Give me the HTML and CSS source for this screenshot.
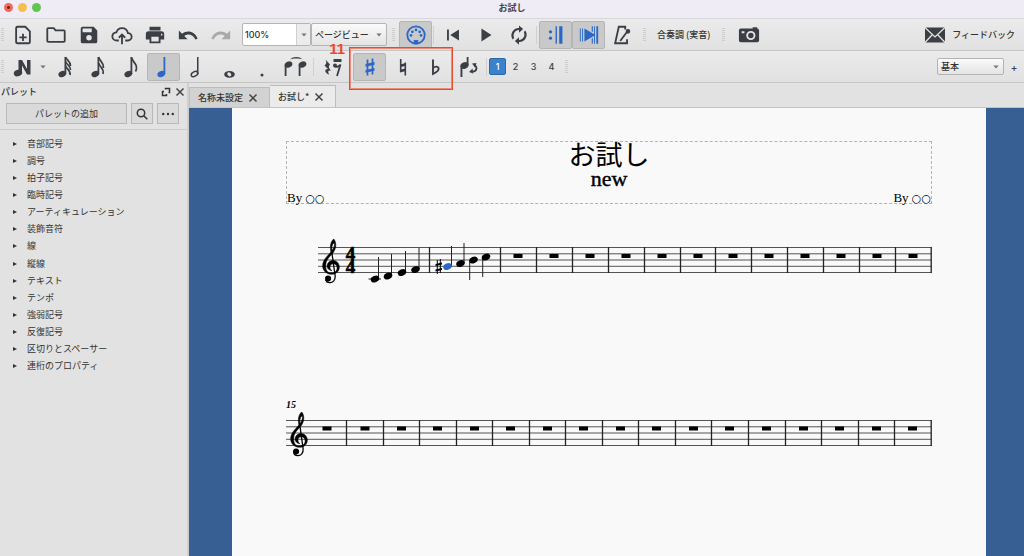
FILE: index.html
```html
<!DOCTYPE html>
<html lang="ja">
<head>
<meta charset="utf-8">
<title>お試し</title>
<link rel="stylesheet" href="styles.css">
</head>
<body>
<svg class="defs" aria-hidden="true">
  <symbol id="arrow" viewBox="0 0 8 5"><path d="M.5 .5h7L4 4.5z" fill="#777"/></symbol>
  <symbol id="cross" viewBox="0 0 10 10"><path d="M1.500 1.500l7 7M8.500 1.500l-7 7" stroke="#444" stroke-width="1.500" fill="none"/></symbol>
  <symbol id="stem-note" viewBox="0 0 24 24"><ellipse cx="9.300" cy="19" rx="4" ry="3" transform="rotate(-25 9.300 19)"/><path d="M11.500 2h1.800v17h-1.800z"/></symbol>
  <symbol id="clef" viewBox="0 0 18 47">
    <path stroke="currentColor" stroke-width=".6" d="M9.300 15.500C7.300 8.500 8.800 3.500 11.800 1 C15 5 14.500 11.500 10.200 16.300 C5.700 20.500 3.500 24 3.500 28.500 C3.500 33.500 6 36 10 35.800 C13.700 35.600 15.600 33 15.200 30 C14.900 27.600 13.500 26.300 11.300 26.400 C9 26.500 7.700 28 7.900 29.800 C8 31.500 8.700 32.500 9.800 33.400 C7 33 4.900 31 5 28.500 C5.100 25.500 7.700 22.900 11 22.900 C14.700 22.900 17.500 26 17.500 29.800 C17.500 34 14 37 9.800 37 C4.500 37 .5 33.500 .5 28.500 C.5 22.500 5 19 8.700 14.500 C12 10.500 13.200 7.500 12.300 4.800 C9.800 6.500 9.300 10 10.300 15z"/>
    <path d="M9.700 13.500L13.200 38.500C13.700 43 11 45.800 7.700 45.700C5.500 45.600 4 44.500 3.600 42.500" fill="none" stroke="currentColor" stroke-width="1.300"/>
    <circle cx="6" cy="41.500" r="3.100"/>
  </symbol>
  <symbol id="head" viewBox="-5 -4 10 8"><ellipse rx="4.400" ry="3.200" transform="rotate(-22)"/></symbol>
</svg>

<div class="app">
  <header class="titlebar">
    <div class="lights"><span class="light close"></span><span class="light mini"></span><span class="light full"></span></div>
    <h1>お試し</h1>
  </header>

  <div class="toolbar">
    <span class="grip"></span>
    <button class="tool" aria-label="新規"><svg class="line" viewBox="0 0 24 24"><path d="M14.500 3H6Q4.500 3 4.500 4.500v15Q4.500 21 6 21h12q1.500 0 1.500-1.500V8zM12 10.500v8M8 14.500h8"/></svg></button>
    <button class="tool" aria-label="開く"><svg class="line" viewBox="0 0 24 24"><path d="M2.500 5.500Q2.500 4.500 3.500 4.500H9.500l2 2.500h9q1 0 1 1v10.500q0 1-1 1H3.500q-1 0-1-1z"/></svg></button>
    <button class="tool" aria-label="保存"><svg viewBox="0 0 24 24"><path fill-rule="evenodd" d="M5 3h12l4 4v12q0 2-2 2H5q-2 0-2-2V5q0-2 2-2zM5 5v4h10V5zM12 12a3 3 0 100 6 3 3 0 000-6z"/></svg></button>
    <button class="tool" aria-label="オンライン保存"><svg class="line" viewBox="0 0 24 24"><path d="M8.500 18H6.500C3.500 18 1.500 16 1.500 13.500S3.500 9.500 5.800 9.200C6.700 6.500 9 4.500 12 4.500c3.300 0 5.800 2.300 6.500 5.500 2.200 0 4 1.700 4 4s-1.800 4-4 4H15.500M12 22V12M8.500 15l3.500-3.500 3.500 3.500"/></svg></button>
    <button class="tool" aria-label="印刷"><svg viewBox="0 0 24 24"><path fill-rule="evenodd" d="M6 3h12v4H6zM5 8h14q3 0 3 3v6h-4v4H6v-4H2v-6q0-3 3-3zM8 14v5h8v-5zM18.500 10.500v2h1.500v-2z"/></svg></button>
    <button class="tool" aria-label="元に戻す"><svg viewBox="0 0 24 24"><path d="M2 7v9.500h9.500L8 13c3.500-3 9.500-2 12 4l2.500-1C19.500 8 11.500 6 5.500 10.500z"/></svg></button>
    <button class="tool faded" aria-label="やり直し"><svg viewBox="0 0 24 24"><path d="M22 7v9.500h-9.500L16 13c-3.500-3-9.500-2-12 4l-2.500-1C4.500 8 12.500 6 18.500 10.500z"/></svg></button>
    <div class="zoom"><input type="text" value="100%" aria-label="ズーム"><button aria-label="ズーム一覧"><svg><use href="#arrow"/></svg></button></div>
    <div class="drop view"><select aria-label="表示"><option>ページビュー</option></select><svg><use href="#arrow"/></svg></div>
    <span class="grip gap"></span>
    <button class="tool on" aria-label="MIDI入力"><svg viewBox="0 0 24 24"><circle cx="12" cy="12" r="9.500" fill="none" stroke="currentColor" stroke-width="2"/><path d="M9.500 17.500h5v4h-5z"/><circle cx="6.500" cy="12.500" r="1.500"/><circle cx="8" cy="8.500" r="1.500"/><circle cx="12" cy="6.500" r="1.500"/><circle cx="16" cy="8.500" r="1.500"/><circle cx="17.500" cy="12.500" r="1.500"/></svg></button>
    <span class="sep"></span>
    <button class="tool" aria-label="先頭へ"><svg viewBox="0 0 24 24"><path d="M5.500 6h2v12h-2zM18.500 6v12L9 12z"/></svg></button>
    <button class="tool" aria-label="再生"><svg viewBox="0 0 24 24"><path d="M7 5v14l11-7z"/></svg></button>
    <button class="tool" aria-label="ループ再生"><svg viewBox="0 0 24 24"><path d="M12 1.500l4.500 4L12 9.500V6.500a6 6 0 00-5.200 8.800l-1.700 1.500A8 8 0 0112 4.300zM12 22.500l-4.500-4 4.500-4v3a6 6 0 005.200-8.800l1.700-1.500A8 8 0 0112 19.700z"/></svg></button>
    <span class="sep"></span>
    <button class="tool on" aria-label="反復再生"><svg viewBox="0 0 24 24"><path d="M11.500 2.500h1.500v19h-1.500zM15.500 2.500h3.500v19h-3.500z"/><circle cx="6" cy="8.500" r="1.800"/><circle cx="6" cy="15.500" r="1.800"/></svg></button>
    <button class="tool on" aria-label="再生位置を追従"><svg viewBox="0 0 24 24"><path d="M2 5h1v14H2zM4.500 5h1v14h-1zM7 5l12 7-12 7zM15 2.500h1.200v6H15zM15 15.500h1.200v6H15zM17.500 2.500h1v19h-1zM20 2.500h2v19h-2z"/></svg></button>
    <button class="tool" aria-label="メトロノーム"><svg class="line" viewBox="0 0 24 24"><path d="M15.500 6V3h-7L4.500 21h13v-4.500M10 18.500L19 6.500M13.500 21h4"/><circle cx="18.500" cy="8" r="1.500" fill="currentColor"/></svg></button>
    <span class="grip gap"></span>
    <button class="label">合奏調 (実音)</button>
    <span class="grip gap"></span>
    <button class="tool camera" aria-label="画像キャプチャ"><svg viewBox="0 0 24 24"><path fill-rule="evenodd" d="M3 5h13V3.500h5V5q2 0 2 2v11q0 2-2 2H3q-2 0-2-2V7q0-2 2-2zM4 8v2h3V8zM14 7.500a5 5 0 100 10 5 5 0 000-10zM14 9.500a3 3 0 110 6 3 3 0 010-6z"/></svg></button>
    <button class="label feedback"><svg viewBox="0 0 22 16"><path fill="#3b3f45" d="M1 .5h20v15H1z"/><path d="M1 .5l10 9.500L21 .5M1 15.500L8 8M21 15.500L14 8" fill="none" stroke="#e6e6e6" stroke-width="1.200"/></svg>フィードバック</button>
  </div>

  <div class="toolbar second">
    <span class="grip"></span>
    <button class="tool entry" aria-label="音符入力"><svg viewBox="0 0 24 24"><path d="M7.500 5H11l5 9V5h3.500v14.500H16L11 10.500V18H7.500z"/><ellipse cx="7" cy="18" rx="4.300" ry="3.200" transform="rotate(-20 7 18)"/></svg></button>
    <button class="more" aria-label="入力方式"><svg><use href="#arrow"/></svg></button>
    <button class="tool" aria-label="32分音符"><svg viewBox="0 0 24 24"><use href="#stem-note"/><path d="M12.500 2c1 3 5 4 5 9M12.500 6.500c1 3 5 4 5 8.500M12.500 11c1 3 5.500 4 4.500 9" fill="none" stroke="currentColor" stroke-width="1.700"/></svg></button>
    <button class="tool" aria-label="16分音符"><svg viewBox="0 0 24 24"><use href="#stem-note"/><path d="M12.500 2c1 4 5.500 5 5 11M12.500 8c1 4 6 5 4.500 11" fill="none" stroke="currentColor" stroke-width="1.700"/></svg></button>
    <button class="tool" aria-label="8分音符"><svg viewBox="0 0 24 24"><use href="#stem-note"/><path d="M12.500 2.500c1 5 7.500 7 4 14" fill="none" stroke="currentColor" stroke-width="1.700"/></svg></button>
    <button class="tool on" aria-label="4分音符"><svg viewBox="0 0 24 24"><use href="#stem-note"/></svg></button>
    <button class="tool" aria-label="2分音符"><svg viewBox="0 0 24 24"><path d="M12 2h1.500v17H12z"/><ellipse cx="9.500" cy="19" rx="3.500" ry="2.200" transform="rotate(-30 9.500 19)" fill="none" stroke="currentColor" stroke-width="1.500"/></svg></button>
    <button class="tool" aria-label="全音符"><svg viewBox="0 0 24 24"><path fill-rule="evenodd" d="M11.500 16c3.200 0 5.300 1.500 5.300 3.400s-2.100 3.300-5.300 3.300-5.300-1.400-5.300-3.300S8.300 16 11.500 16zM10.500 17.200c-1.500.3-1.500 1.900-.7 3s2.200 1.500 3 .9.500-1.900-.2-2.800-1.500-1.200-2.100-1.100z"/></svg></button>
    <button class="tool" aria-label="付点"><svg viewBox="0 0 24 24"><circle cx="11" cy="20" r="1.500"/></svg></button>
    <button class="tool" aria-label="タイ"><svg viewBox="0 0 24 24"><ellipse cx="4.500" cy="9.500" rx="4" ry="3" transform="rotate(-25 4.500 9.500)"/><ellipse cx="18.500" cy="9.500" rx="4" ry="3" transform="rotate(-25 18.500 9.500)"/><path d="M.7 10h1.800v11H.7zM14.700 10h1.800v11h-1.800zM6 4.500C9 1.200 15.500 1.200 18.500 4.500 15 3.200 9.500 3.200 6 4.500z"/></svg></button>
    <span class="sep"></span>
    <button class="tool" aria-label="休符"><svg viewBox="2 0 24 24"><path d="M6.500 4.500l4.500 5c-1.700 2-1.500 3 1.200 6.300-2.700-.8-4 .5-2 3.700-5-1.500-5-6-1.200-5.500L5.500 10.500C7.700 8.500 7.700 7.500 6.500 4.500zM14.500 4h8v3h-8z"/><path d="M15.500 11c1.500 1.500 4 1 6-1.500L18 21" fill="none" stroke="currentColor" stroke-width="1.800"/><circle cx="16" cy="10.500" r="2"/></svg></button>
    <span class="sep"></span>
    <button class="tool on" aria-label="シャープ"><svg viewBox="0 0 24 24"><path d="M9.500 4.500v16M14.500 3.500v16" stroke="currentColor" stroke-width="1.700"/><path d="M7.500 9l9-2v2.800l-9 2zM7.500 15l9-2v2.800l-9 2z"/></svg></button>
    <button class="tool" aria-label="ナチュラル"><svg viewBox="0 0 24 24"><path d="M9.700 4v13M14.300 7.500v13" stroke="currentColor" stroke-width="1.600"/><path d="M9 9.500l6-1.500v2.800L9 12.300zM9 14.700l6-1.500V16l-6 1.500z"/></svg></button>
    <button class="tool" aria-label="フラット"><svg viewBox="0 0 24 24"><path d="M9 4.500v14.500c3-1.500 6.500-3.700 5.500-6.200-.8-1.700-3.500-1.500-5.500.2" fill="none" stroke="currentColor" stroke-width="1.900"/></svg></button>
    <button class="tool" aria-label="符尾の反転"><svg viewBox="0 0 24 24"><ellipse cx="7.500" cy="10.500" rx="4.200" ry="3.200" transform="rotate(-25 7.500 10.500)"/><path d="M3.500 11h1.900v11H3.500zM9.700 2h1.800v8H9.700zM15 8.500l4.500-.5-1.500 4.500zM12 17l3.500-3.500.7 5z"/><path d="M17.500 10c3.500 2.500 2 7-2.500 6.500" fill="none" stroke="currentColor" stroke-width="1.800"/></svg></button>
    <span class="sep"></span>
    <div class="voices"><button class="voice current">1</button><button class="voice">2</button><button class="voice">3</button><button class="voice">4</button></div>
    <span class="grip gap"></span>
    <div class="drop workspace-pick"><select aria-label="ワークスペース"><option>基本</option></select><svg><use href="#arrow"/></svg></div>
    <button class="add" aria-label="ワークスペースを追加">+</button>
  </div>

  <div class="workspace">
    <aside class="dock">
      <div class="dock-head">
        <h2>パレット</h2>
        <button class="mini-btn" aria-label="切り離す"><svg class="thin" viewBox="0 0 10 10"><path d="M4.500 2.500V1.500H8.500V5.500H7.500M3 4.500H1.500V8.500H5.500V7"/></svg></button>
        <button class="mini-btn" aria-label="閉じる"><svg><use href="#cross"/></svg></button>
      </div>
      <div class="dock-tools">
        <button class="add-palette">パレットの追加</button>
        <button aria-label="検索"><svg class="thin" viewBox="0 0 12 12"><circle cx="5" cy="5" r="3.700"/><path d="M7.800 7.800l3.500 3.500"/></svg></button>
        <button aria-label="その他"><svg viewBox="0 0 12 12"><circle cx="1.200" cy="6" r="1.200"/><circle cx="6" cy="6" r="1.200"/><circle cx="10.800" cy="6" r="1.200"/></svg></button>
      </div>
      <ul class="palettes">
        <li>音部記号</li><li>調号</li><li>拍子記号</li><li>臨時記号</li><li>アーティキュレーション</li><li>装飾音符</li><li>線</li><li>縦線</li><li>テキスト</li><li>テンポ</li><li>強弱記号</li><li>反復記号</li><li>区切りとスペーサー</li><li>連桁のプロパティ</li>
      </ul>
    </aside>

    <main class="score-area">
      <div class="tabs">
        <div class="tab">名称未設定<button class="mini-btn" aria-label="閉じる"><svg><use href="#cross"/></svg></button></div>
        <div class="tab active">お試し*<button class="mini-btn" aria-label="閉じる"><svg><use href="#cross"/></svg></button></div>
      </div>
      <div class="canvas">
        <article class="page">
          <div class="frame">
            <p class="title">お試し</p>
            <p class="subtitle">new</p>
            <div class="credits"><span>By <span class="rings">○○</span></span><span>By <span class="rings">○○</span></span></div>
          </div>
          <svg class="system" viewBox="0 0 646 50">
            <path class="staff" d="M32 12.500H645.500M32 18.800H645.500M32 25H645.500M32 31.300H645.500M32 37.500H645.500"/>
            <path class="bars" d="M143.500 12v26M214.500 12v26M250.500 12v26M286.500 12v26M322.500 12v26M358.500 12v26M394.500 12v26M429.500 12v26M465.500 12v26M501.500 12v26M537.500 12v26M573.500 12v26M609.500 12v26M645.200 12v26"/>
            <path class="rests" d="M227.500 21h9M263.500 21h9M299.500 21h9M335.500 21h9M371.500 21h9M407.500 21h9M442.500 21h9M478.500 21h9M514.500 21h9M550.500 21h9M586.500 21h9M622.500 21h9"/>
            <use href="#clef" x="36" y="3" width="18" height="46"/>
            <text class="meter" x="64.500" y="25">4</text><text class="meter" x="64.500" y="37.500">4</text>
            <path class="stems" d="M82.500 44H95M92.500 22v22M105.500 19v21M119.500 16v21M133 13v21M165.500 11v21M178 8v20M183.700 26v19M196.700 22v20"/>
            <use href="#head" x="84" y="40" width="10" height="8"/><use href="#head" x="97" y="37" width="10" height="8"/><use href="#head" x="111" y="33.500" width="10" height="8"/><use href="#head" x="124.500" y="30.500" width="10" height="8"/>
            <use class="picked" href="#head" x="156.500" y="27.500" width="10" height="8"/>
            <use href="#head" x="169.500" y="24.500" width="10" height="8"/><use href="#head" x="182.500" y="21" width="10" height="8"/><use href="#head" x="195" y="18" width="10" height="8"/>
            <path class="sharp" d="M151.300 25v14M154.300 24v14"/><path d="M149.500 29l6.500-1.500v2L149.500 31zM149.500 34.500l6.500-1.500v2l-6.500 1.500z"/>
          </svg>
          <svg class="system later" viewBox="0 -10 646 60">
            <text class="number" x="0" y="0">15</text>
            <path class="staff" d="M0 12.500H645.500M0 18.800H645.500M0 25H645.500M0 31.300H645.500M0 37.500H645.500"/>
            <path class="bars" d="M60.500 12v26M97.500 12v26M133.500 12v26M170.500 12v26M206.500 12v26M243.500 12v26M279.500 12v26M316.500 12v26M352.500 12v26M389.500 12v26M425.500 12v26M462.500 12v26M499.500 12v26M535.500 12v26M572.500 12v26M608.500 12v26M645.200 12v26"/>
            <path class="rests" d="M36.500 20.500h9M74.500 20.500h9M111 20.500h9M147 20.500h9M184 20.500h9M220 20.500h9M257 20.500h9M293 20.500h9M330 20.500h9M366 20.500h9M403 20.500h9M439 20.500h9M476 20.500h9M513 20.500h9M549 20.500h9M586 20.500h9M622 20.500h9"/>
            <use href="#clef" x="4" y="3" width="18" height="46"/>
          </svg>
        </article>
      </div>
    </main>
  </div>

  <div class="callout"><span>11</span></div>
</div>
</body>
</html>
```

FILE: styles.css
```css
* { box-sizing: border-box; }

body {
  margin: 0;
  font: 9px/12px "Noto Sans CJK JP", sans-serif;
  color: #333;
  background: #e2e2e2;
}

h1, h2, p, ul { margin: 0; padding: 0; }
button, input, select { font: inherit; color: inherit; margin: 0; }
button { border: 0; padding: 0; background: none; }
svg { fill: currentColor; flex: none; display: block; }
.line { fill: none; stroke: currentColor; stroke-width: 2; }
.thin { fill: none; stroke: currentColor; stroke-width: 1.5; }

.defs { position: absolute; width: 0; height: 0; }

.app {
  position: relative;
  display: flex;
  flex-direction: column;
  min-height: 100vh;
}

/* window title */
.titlebar {
  display: grid;
  grid-template-columns: 1fr auto 1fr;
  align-items: center;
  height: 18px;
  padding-bottom: 3px;
  background: #f0ecf5;
}
.titlebar h1 { font-size: 9px; font-weight: 700; color: #444; }
.lights { display: flex; gap: 5px; padding-left: 4px; }
.light { width: 9px; height: 9px; border-radius: 50%; }
.close { background: radial-gradient(circle, #8b1a10 1px, #ed6a5e 2px); }
.mini { background: #f5bf4f; }
.full { background: #61c554; }

/* toolbars */
.toolbar {
  display: flex;
  align-items: center;
  height: 33px;
  padding: 0 9px 0 1px;
  border-top: 1px solid #d8d8d8;
  border-bottom: 1px solid #c6c6c6;
  background: linear-gradient(#ebebeb, #e1e1e1);
  color: #3b3f45;
}
.toolbar.second { height: 32px; padding-right: 6px; border-top: 0; }
.grip {
  flex: none;
  width: 3px;
  height: 13px;
  margin-right: 2px;
  background: repeating-linear-gradient(#cdcdcd 0 1px, transparent 1px 2px);
}
.grip.gap { margin: 0 4px 0 5px; }
.sep { flex: none; width: 1px; height: 18px; margin: 0 2px 0 1px; background: #cfcfcf; }
.tool {
  display: flex;
  align-items: center;
  justify-content: center;
  flex: none;
  width: 33px;
  height: 28px;
  border-radius: 2px;
}
.tool svg { width: 22px; height: 22px; }
.second .tool svg { width: 24px; height: 24px; }
.tool.on { background: #c9c9c9; border: 1px solid #b5b5b5; color: #2a68c8; }
.tool.faded { color: #a9a9a9; }
.tool.camera { margin-left: 3px; }

.zoom, .drop {
  flex: none;
  height: 23px;
  border: 1px solid #b4b4b4;
  border-radius: 2px;
  color: #333;
}
.zoom { display: flex; width: 69px; margin-left: 5px; background: #fff; }
.zoom input {
  flex: 1;
  min-width: 0;
  border: 0;
  padding: 0 2px;
  background: none;
  font-family: Inter, sans-serif;
  font-size: 9px;
  font-weight: 500;
}
.zoom button { width: 14px; background: #ececec; border-left: 1px solid #d0d0d0; }
.zoom button svg { margin: 0 auto; }
.zoom svg, .drop svg, .more svg { width: 6px; height: 4px; }
.drop { display: grid; align-items: center; background: linear-gradient(#fafafa, #e4e4e4); }
.drop select {
  grid-area: 1 / 1;
  appearance: none;
  width: 100%;
  height: 100%;
  padding: 0 3px;
  border: 0;
  background: none;
  font-weight: 500;
}
.drop svg { grid-area: 1 / 1; justify-self: end; margin-right: 4px; pointer-events: none; }
.view { width: 76px; }

.label { font-weight: 500; padding: 0 7px; color: #333; white-space: nowrap; }
.feedback { display: flex; align-items: center; gap: 6px; margin-left: auto; padding: 0; }
.feedback svg { width: 22px; height: 16px; }

.more { width: 8px; margin-right: 1px; }
.more svg { margin: 0 auto; }
.voices { display: flex; gap: 1px; font: 500 9px/15px Inter, sans-serif; }
.voice { width: 17px; height: 17px; border-radius: 2px; }
.voice.current { background: #3b82cc; border: 1px solid #2c69ab; color: #fff; }
.workspace-pick { width: 67px; height: 17px; margin-left: auto; }
.add { width: 8px; margin-left: 6px; font: 500 10px/12px Inter, sans-serif; }

/* palettes dock */
.workspace { display: flex; flex: 1; }
.dock { flex: none; width: 189px; border-right: 2px solid #cfcfcf; background: #e2e2e2; }
.dock-head { display: flex; align-items: center; gap: 4px; height: 17px; padding: 0 2px 0 1px; }
.dock-head h2 { flex: 1; font-size: 9px; font-weight: 500; }
.mini-btn { width: 10px; height: 10px; }
.mini-btn svg { width: 10px; height: 10px; }
.dock-tools {
  display: flex;
  gap: 4px;
  height: 30px;
  padding: 3px 8px 5px 6px;
  border-bottom: 1px solid #cdcdcd;
}
.dock-tools button {
  display: grid;
  place-items: center;
  width: 22px;
  border: 1px solid #b8b8b8;
  background: #dadada;
}
.dock-tools .add-palette { flex: 1; }
.dock-tools svg { width: 12px; height: 12px; }
.palettes {
  display: grid;
  grid-auto-rows: 1fr;
  height: 240px;
  margin-top: 5px;
  list-style: none;
}
.palettes li { display: flex; align-items: center; gap: 10px; padding-left: 13px; }
.palettes li::before {
  content: "";
  border: solid transparent;
  border-width: 2px 0 2px 4px;
  border-left-color: #333;
}

/* document tabs */
.score-area { flex: 1; min-width: 0; display: flex; flex-direction: column; }
.tabs {
  display: flex;
  align-items: flex-end;
  height: 25px;
  border-bottom: 1px solid #c4c4c4;
}
.tab {
  display: flex;
  align-items: center;
  gap: 5px;
  height: 20px;
  padding: 0 11px 0 8px;
  border: 1px solid #bcbcbc;
  border-bottom: 0;
  background: #d2d2d2;
  font-weight: 500;
}
.tab.active { height: 22px; background: #ebebeb; border-left: 0; }

/* score */
.canvas { flex: 1; display: flex; padding: 0 38px 0 43px; background: #385f94; }
.page { flex: 1; min-width: 0; padding: 33px 54px 0; background: #f9f9f9; color: #000; }
.frame {
  display: flex;
  flex-direction: column;
  align-items: center;
  height: 63px;
  border: 1px dashed #b4b4b4;
  font-family: "Liberation Serif", serif;
}
.title { font: 27px/24px "Noto Sans CJK JP", sans-serif; }
.subtitle { font-size: 22px; line-height: 26px; -webkit-text-stroke: 0.4px #000; }
.credits {
  display: flex;
  justify-content: space-between;
  align-self: stretch;
  font-size: 13px;
  line-height: 12px;
}
.rings { font: 11px/12px "DejaVu Sans", sans-serif; }
.system { width: 100%; height: auto; margin-top: 31px; overflow: visible; }
.system.later { margin-top: 113px; }
.staff { stroke: #555; stroke-width: 1; }
.bars { stroke: #222; stroke-width: 1.3; }
.rests { stroke: #000; stroke-width: 4; }
.stems { stroke: #222; stroke-width: 1; }
.sharp { stroke: #000; stroke-width: 1; }
.picked { color: #2a68c8; fill: #2a68c8; }
.meter { font: bold 19px "Liberation Serif", serif; text-anchor: middle; stroke: #000; stroke-width: 0.6; }
.number { font: italic bold 10px "Liberation Serif", serif; }

/* highlighted accidentals group */
.callout {
  position: absolute;
  left: 349px;
  top: 47px;
  width: 104px;
  height: 43px;
  border: 1px solid #e8492f;
  outline: 1px solid #f08a78;
  outline-offset: -2px;
  pointer-events: none;
}
.callout span {
  position: absolute;
  right: 100%;
  top: -8px;
  margin-right: 5px;
  font: bold 15px/18px "Liberation Sans", sans-serif;
  color: #e8492f;
}
```
